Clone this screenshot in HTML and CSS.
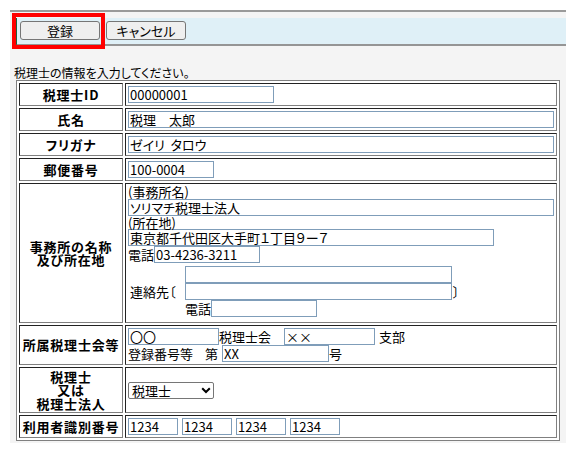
FILE: index.html
```html
<!DOCTYPE html>
<html lang="ja">
<head>
<meta charset="utf-8">
<title>税理士情報</title>
<link rel="stylesheet" href="styles.css">
</head>
<body>
<div class="panel">
  <div class="toolbar">
    <button class="btn" type="button">登録</button>
    <button class="btn" type="button">キャンセル</button>
  </div>
  <p class="intro">税理士の情報を入力してください。</p>
  <table class="form">
    <tr class="h23">
      <th>税理士ID</th>
      <td><input class="in w-id" value="00000001"></td>
    </tr>
    <tr class="h23">
      <th>氏名</th>
      <td><input class="in w-full" value="税理　太郎"></td>
    </tr>
    <tr class="h23">
      <th>フリガナ</th>
      <td><input class="in w-full" value="ゼイリ  タロウ"></td>
    </tr>
    <tr class="h23">
      <th>郵便番号</th>
      <td><input class="in w-zip" value="100-0004"></td>
    </tr>
    <tr class="h140">
      <th><span class="lbl">事務所の名称</span><span class="lbl">及び所在地</span></th>
      <td class="office">
        <div class="line">(事務所名)</div>
        <input class="in w-full" value="ソリマチ税理士法人">
        <div class="line2">(所在地)</div>
        <input class="in w-addr" value="東京都千代田区大手町１丁目９ー７">
        <div class="tel"><span>電話</span><input class="in w-tel" value="03-4236-3211"></div>
        <div class="contact">
          <div class="c-label">連絡先〔</div>
          <div class="c-fields">
            <input class="in w-contact">
            <input class="in w-contact">
            <div class="tel"><span>電話</span><input class="in w-tel"></div>
          </div>
          <div class="c-close">〕</div>
        </div>
      </td>
    </tr>
    <tr class="h40">
      <th>所属税理士会等</th>
      <td>
        <div class="row17"><input class="in w-kai" value="〇〇"><span>税理士会</span><input class="in w-kai gap13" value="××"><span class="gap4">支部</span></div>
        <div class="row17"><span>登録番号等</span><span class="gap12">第</span><input class="in w-reg gap4" value="XX"><span>号</span></div>
      </td>
    </tr>
    <tr class="h46">
      <th><span class="lbl">税理士</span><span class="lbl">又は</span><span class="lbl">税理士法人</span></th>
      <td>
        <div class="select-wrap">
          <select class="sel"><option>税理士</option><option>税理士法人</option></select>
          <svg class="chev" width="10" height="7" viewBox="0 0 10 7"><polyline points="1.2,1.2 5,5 8.8,1.2" fill="none" stroke="#000" stroke-width="2"/></svg>
        </div>
      </td>
    </tr>
    <tr class="h23">
      <th>利用者識別番号</th>
      <td>
        <div class="ids">
          <input class="in w-4" value="1234">
          <input class="in w-4" value="1234">
          <input class="in w-4" value="1234">
          <input class="in w-4" value="1234">
        </div>
      </td>
    </tr>
  </table>
</div>
<div class="highlight"></div>
</body>
</html>
```
FILE: styles.css
```css
* { box-sizing: border-box; }
html, body { margin: 0; padding: 0; background: #fff; }
body {
  position: relative;
  width: 572px;
  height: 456px;
  overflow: hidden;
  font-family: "Noto Sans CJK JP", "Noto Sans", sans-serif;
  font-size: 13px;
  color: #000;
  font-feature-settings: "palt";
}
.panel {
  margin: 10px 6px 0 10px;
  background: #f4f4f4;
  border-top: 2px solid #9a9a9a;
  padding: 6px 0 2px;
}
.toolbar {
  margin-left: 6px;
  height: 28px;
  background: #dff0f7;
  border-left: 1px solid #1f5f3f;
  border-bottom: 2px solid #959595;
  padding: 3px 0 0 3px;
  display: flex;
  gap: 6px;
  align-items: flex-start;
}
.btn {
  width: 80px;
  height: 19px;
  margin: 0;
  padding: 0;
  font-family: "Noto Sans CJK JP", sans-serif;
  font-size: 13px;
  line-height: 17px;
  font-feature-settings: "palt";
  color: #000;
  background: #efefef;
  border: 1px solid #767676;
  border-radius: 3px;
}
.intro {
  margin: 19px 0 0 4px;
  height: 15px;
  font-size: 12px;
  line-height: 15px;
}
.form {
  margin-left: 6px;
  width: 544px;
  border-collapse: separate;
  border-spacing: 2px;
  border: 1px solid #808080;
  background: #fff;
}
.form th, .form td {
  border: 1px solid;
  border-color: #222 #808080 #808080 #222;
  background: #fff;
  vertical-align: middle;
}
.form th {
  width: 104px;
  padding: 0;
  text-align: center;
  font-weight: bold;
  font-size: 13px;
  line-height: 14px;
  letter-spacing: 0.8px;
}
.lbl {
  display: block;
  height: 13.5px;
  line-height: 13.5px;
}
.form td {
  padding: 1px 1px 1px 2px;
  line-height: 13px;
}
.h23 { height: 23px; }
.h40 { height: 40px; }
.h46 { height: 46px; }
.h140 { height: 140px; }

.in {
  display: block;
  height: 17px;
  margin: 0;
  padding: 0 1px;
  border: 1px solid #7f9db9;
  border-radius: 0;
  background: #fff;
  font-family: "Noto Sans CJK JP", sans-serif;
  font-size: 13px;
  font-feature-settings: "palt";
  line-height: 15px;
  color: #000;
  outline: none;
}
.w-id { width: 146px; }
.w-full { width: 426px; }
.w-zip { width: 86px; }
.w-addr { width: 366px; }
.w-tel { width: 106px; }
.w-contact { width: 267px; }
.w-kai { width: 91px; }
.w-reg { width: 107px; }
.w-4 { width: 50px; }

.form td.office { vertical-align: top; }
.line { height: 14px; line-height: 14px; }
.line2 { height: 13px; line-height: 13px; }
.tel { display: flex; align-items: center; height: 17px; }
.contact {
  display: flex;
  align-items: center;
  margin: 3px 0 0 2px;
}
.c-label { width: 55px; }
.c-close { margin-left: 1px; }

.row17 { display: flex; align-items: center; height: 17px; }
.gap13 { margin-left: 13px; }
.gap12 { margin-left: 12px; }
.gap4 { margin-left: 4px; }

.select-wrap {
  position: relative;
  width: 86px;
  height: 17px;
}
.sel {
  -webkit-appearance: none;
  appearance: none;
  display: block;
  width: 86px;
  height: 17px;
  margin: 0;
  padding: 0 0 0 3px;
  border: 1px solid #767676;
  border-radius: 2px;
  background: #fff;
  font-family: "Noto Sans CJK JP", sans-serif;
  font-size: 13px;
  font-feature-settings: "palt";
  line-height: 15px;
  color: #000;
}
.chev {
  position: absolute;
  left: 73px;
  top: 5px;
  pointer-events: none;
}
.ids { display: flex; gap: 4px; }

.highlight {
  position: absolute;
  left: 12px;
  top: 13px;
  width: 93px;
  height: 36px;
  border: 4px solid #ff0000;
  pointer-events: none;
}
```
